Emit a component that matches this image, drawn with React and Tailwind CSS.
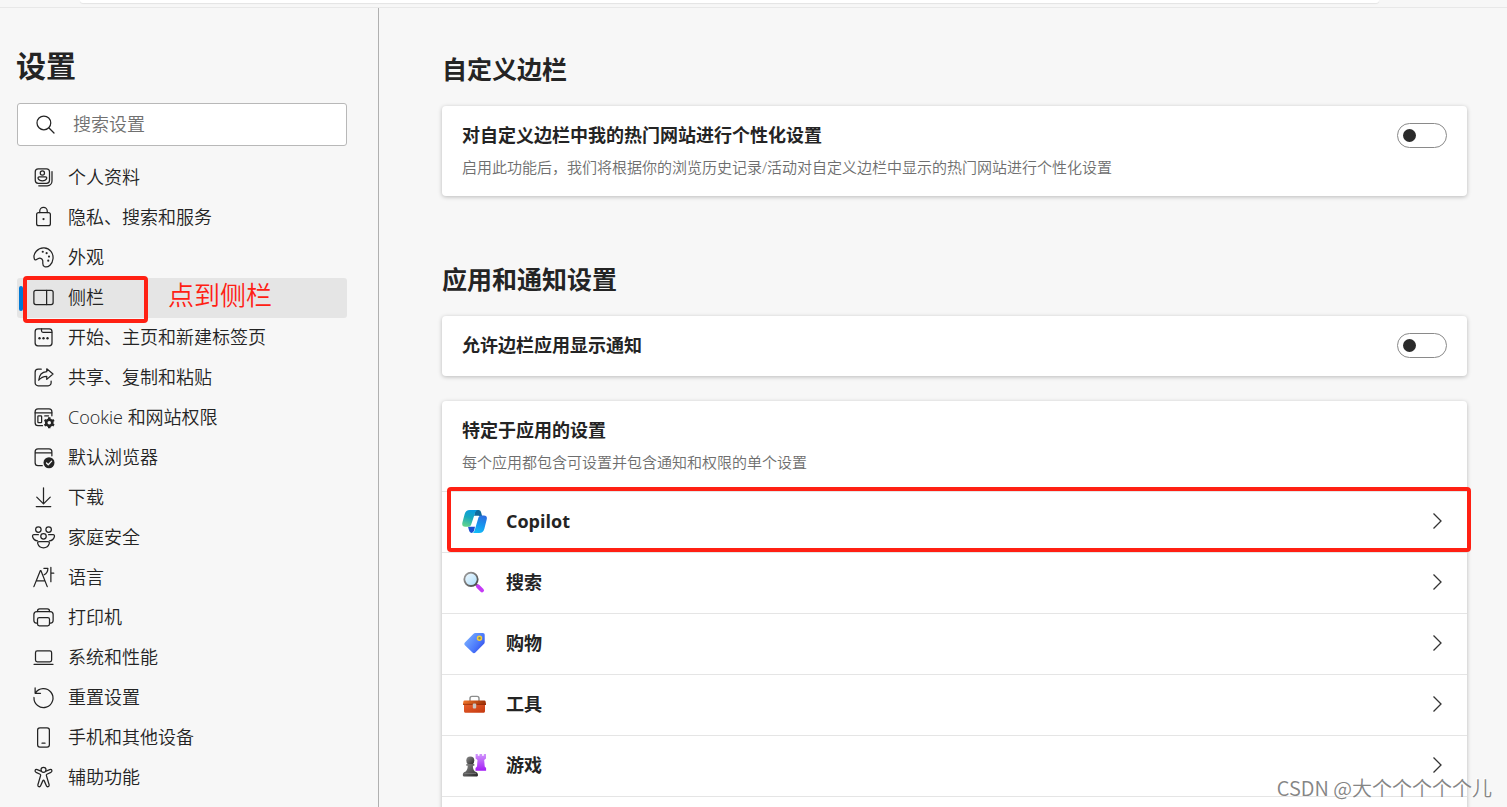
import React, { useState } from "react";

const LineIcon = ({ children }) => (
    <svg
        className="size-[25px] shrink-0"
        viewBox="0 0 20 20"
        fill="none"
        stroke="currentColor"
        strokeWidth="1"
        strokeLinecap="round"
        strokeLinejoin="round"
        aria-hidden="true"
    >
        {children}
    </svg>
)

const navItems = [
    {
        label: "个人资料",
        icon: (
            <>
                <rect x="3.4" y="3" width="11.4" height="11.6" rx="2.4" />
                <circle cx="9.1" cy="6.4" r="1.7" />
                <path d="M6.7 9.4h4.8c1.9 0 1.4 3.3-2.4 3.3s-4.3-3.3-2.4-3.3z" />
                <path d="M16.8 5.2v7.6c0 2.2-1.6 3.8-3.8 3.8H6.2" />
            </>
        ),
    },
    {
        label: "隐私、搜索和服务",
        icon: (
            <>
                <rect x="4.5" y="6" width="11" height="10.5" rx="1.6" />
                <path d="M7 6V4.8a3 3 0 0 1 6 0V6" />
                <circle cx="10" cy="11.2" r="0.9" fill="currentColor" stroke="none" />
            </>
        ),
    },
    {
        label: "外观",
        icon: (
            <>
                <path d="M2.7 11.2C1.2 6.8 5.6 2 10.5 2.3c4.6.3 7.6 4.2 7.1 8.7-.4 4.4-3.8 7.3-6.7 6.4-2.5-.8-1-3.4-1.6-5.2-.6-1.6-2.2-2.1-3.8-1.2-1.3.8-2.3 1.6-2.8.2z" />
                <g fill="currentColor" stroke="none">
                    <circle cx="9.4" cy="5.4" r="0.85" />
                    <circle cx="12.5" cy="6.5" r="0.85" />
                    <circle cx="14.4" cy="9.3" r="0.85" />
                    <circle cx="13.8" cy="12.5" r="0.85" />
                </g>
            </>
        ),
    },
    {
        label: "侧栏",
        active: true,
        icon: (
            <>
                <rect x="2.3" y="4.2" width="15.4" height="11.4" rx="1.6" />
                <path d="M12.5 4.2v11.4" />
            </>
        ),
    },
    {
        label: "开始、主页和新建标签页",
        icon: (
            <>
                <rect x="3.3" y="3.1" width="13.5" height="13.5" rx="2.2" />
                <path d="M8.4 3.1v1.5c0 .8.4 1.2 1.2 1.2h7" />
                <g fill="currentColor" stroke="none">
                    <circle cx="6.8" cy="10.6" r="0.95" />
                    <circle cx="10" cy="10.6" r="0.95" />
                    <circle cx="13.2" cy="10.6" r="0.95" />
                </g>
            </>
        ),
    },
    {
        label: "共享、复制和粘贴",
        icon: (
            <>
                <path d="M12.6 3l5 4.2-5 4.3V9C9.6 9 7.8 10 6.2 12.2c.3-4 2.5-6.6 6.4-6.9z" />
                <path d="M8.2 3.3H5.7a2.4 2.4 0 0 0-2.4 2.4v8.5a2.4 2.4 0 0 0 2.4 2.4h8a2.4 2.4 0 0 0 2.4-2.4v-1.4" />
            </>
        ),
    },
    {
        label: "Cookie 和网站权限",
        icon: (
            <>
                <path d="M9.2 16.5H5.6a2.3 2.3 0 0 1-2.3-2.3V5.4a2.3 2.3 0 0 1 2.3-2.3h8.8a2.3 2.3 0 0 1 2.3 2.3v3.2" />
                <path d="M3.3 6.2h13.4M11 8.7h3" />
                <rect x="5.5" y="8.7" width="3" height="5.3" rx="0.5" />
                <circle cx="14.6" cy="14.2" r="2.4" strokeWidth="2.2" />
                <path
                    d="M14.6 9.8v8.8M10.8 12l7.6 4.4M10.8 16.4l7.6-4.4"
                    strokeWidth="2"
                    strokeLinecap="butt"
                />
                <circle cx="14.6" cy="14.2" r="1.4" fill="#f7f7f7" stroke="none" />
            </>
        ),
    },
    {
        label: "默认浏览器",
        icon: (
            <>
                <path d="M9 16.5H5.6a2.3 2.3 0 0 1-2.3-2.3V5.4a2.3 2.3 0 0 1 2.3-2.3h8.8a2.3 2.3 0 0 1 2.3 2.3v3.2M3.3 6.2h13.4" />
                <circle cx="14.4" cy="14.2" r="4.4" fill="currentColor" stroke="none" />
                <path d="M12.4 14.4l1.4 1.4 2.7-2.9" stroke="#f7f7f7" />
            </>
        ),
    },
    {
        label: "下载",
        icon: <path d="M10 2.2v12.6M4.6 9.7l5.4 5.4 5.4-5.4M4.2 17.2h11.6" />,
    },
    {
        label: "家庭安全",
        icon: (
            <>
                <circle cx="5.9" cy="3.6" r="2.2" />
                <circle cx="14.1" cy="3.6" r="2.2" />
                <circle cx="10" cy="9" r="2.2" />
                <path d="M5.9 7.7H2.4c-1 0-1.4.7-1.1 1.700.5 1.9 1.900 3.100 4 3.300M14.100 7.700h3.500c1 0 1.400.7 1.100 1.700-.5 1.900-1.900 3.100-4 3.300" />
                <path d="M6.600 13.200h6.800c1.100 0 1.500.8 1.200 1.700-.6 2-2.300 3.300-4.600 3.300s-4-1.300-4.600-3.300c-.3-.9.1-1.700 1.200-1.700z" />
            </>
        ),
    },
    {
        label: "语言",
        icon: (
            <>
                <path d="M2.3 17.3L7.5 4.4h.4l5.1 12.9M4.2 12.6h7" />
                <path d="M10.3 2.6h3.2c0 2.6-1 4.3-3 5.2M15.9 1.9v11.4M15.9 6.5h2.3" />
            </>
        ),
    },
    {
        label: "打印机",
        icon: (
            <>
                <path d="M5.2 14.4h-.9a2 2 0 0 1-2-2V7.6a2.4 2.4 0 0 1 2.4-2.4h10.6a2.4 2.4 0 0 1 2.4 2.4v4.8a2 2 0 0 1-2 2h-.9" />
                <path d="M5.2 5.2v-.4c0-1 .7-1.7 1.7-1.7h6.2c1 0 1.7.7 1.7 1.7v.4" />
                <rect x="5.2" y="10" width="9.6" height="6.6" rx="1.4" />
            </>
        ),
    },
    {
        label: "系统和性能",
        icon: (
            <>
                <rect x="3.6" y="4.7" width="12.9" height="8.7" rx="1.4" />
                <path d="M2.4 15.4h15.2" />
            </>
        ),
    },
    {
        label: "重置设置",
        icon: <path d="M3.3 2.3v4.3h4.3M3.5 6.5A7.6 7.6 0 1 1 2.4 10" />,
    },
    {
        label: "手机和其他设备",
        icon: (
            <>
                <rect x="5.3" y="2.2" width="9.4" height="15.4" rx="1.8" />
                <path d="M8.8 14.5h2.4" />
            </>
        ),
    },
    {
        label: "辅助功能",
        icon: (
            <>
                <circle cx="10" cy="3.8" r="2" />
                <path d="M8 4.9L5 3.7c-1.7-.6-2.5 1.4-.9 2.2l3.2 1.5c.4.2.5.5.4 1L5.5 15.8c-.4 1.6 1.6 2.2 2.2.8l1.8-4.1c.2-.5.8-.5 1 0l1.8 4.1c.6 1.4 2.600.8 2.200-.8L12.300 8.400c-.1-.5 0-.8.4-1l3.200-1.500c1.600-.8.8-2.800-.9-2.200L12 4.900" />
            </>
        ),
    },
]

const CopilotIcon = () => (
    <svg className="size-[25px] shrink-0" viewBox="0 0 25 25" aria-hidden="true">
        <defs>
            <linearGradient id="cpLeft" x1="0.6" y1="0" x2="0.3" y2="1">
                <stop offset="0" stopColor="#0a9be0" />
                <stop offset="0.45" stopColor="#18a9bd" />
                <stop offset="1" stopColor="#62d38c" />
            </linearGradient>
            <linearGradient id="cpRight" x1="0.6" y1="0" x2="0.3" y2="1">
                <stop offset="0" stopColor="#2b6fe0" />
                <stop offset="0.5" stopColor="#1795ee" />
                <stop offset="1" stopColor="#12bdf8" />
            </linearGradient>
        </defs>
        <path d="M13.500 1h3.100c1.300 0 2 .7 2.400 2l1.200 4.200h-1.200c-1.100-.2-1.900-.4-2.500-.4H12z" fill="#0f6a9c" />
        <path d="M6 17.700h7l-1 4.300-2 2c-1.700 0-2.400-.8-2.900-2.400z" fill="#1a4fd0" />
        <path d="M7.800 1h8c-1.400.3-2.200 1.200-2.700 2.800L9.300 15.300c-.5 1.700-1.300 2.400-3 2.400H3.200c-2.500 0-3.400-1.700-2.800-4.200L2.700 5C3.500 2.300 5 1 7.800 1z" fill="url(#cpLeft)" />
        <path d="M17.200 24H10c1.400-.3 2.200-1.200 2.700-2.800l3.600-12.100c.5-1.700 1.300-2.700 3-2.700h2.700c2.500 0 3.300 1.500 2.700 4L22.300 20c-.8 2.700-2.300 4-5.100 4z" fill="url(#cpRight)" />
    </svg>
)

const MagnifierIcon = () => (
    <svg className="size-[25px] shrink-0" viewBox="0 0 25 25" aria-hidden="true">
        <defs>
            <linearGradient id="lens" x1="0" y1="0" x2="1" y2="1">
                <stop offset="0" stopColor="#f4fbff" />
                <stop offset="1" stopColor="#a9dcfb" />
            </linearGradient>
            <linearGradient id="rim" x1="0" y1="0" x2="1" y2="1">
                <stop offset="0" stopColor="#a2a2a2" />
                <stop offset="1" stopColor="#454545" />
            </linearGradient>
        </defs>
        <path d="M13.5 13.8l3 3" stroke="#6b6b6b" strokeWidth="2.4" />
        <path d="M16 16.3l4 4" stroke="#c53bf5" strokeWidth="4" strokeLinecap="round" />
        <circle cx="9" cy="9.3" r="6.7" fill="url(#lens)" stroke="url(#rim)" strokeWidth="1.8" />
    </svg>
)

const TagIcon = () => (
    <svg className="size-[25px] shrink-0" viewBox="0 0 25 25" aria-hidden="true">
        <defs>
            <linearGradient id="tagFill" x1="0" y1="0.2" x2="1" y2="0.9">
                <stop offset="0" stopColor="#7db2ff" />
                <stop offset="0.6" stopColor="#4a78fb" />
                <stop offset="1" stopColor="#2f3fe0" />
            </linearGradient>
        </defs>
        <path d="M13.5 2h7.3c1.2 0 1.9.7 1.9 1.9v7c0 .9-.3 1.5-.9 2.1l-8.4 8.6c-.9.9-2 .9-2.9 0l-7.600-7.400c-.8-.8-.8-1.800 0-2.700l8.400-8.600c.6-.6 1.300-.9 2.200-.9z" fill="url(#tagFill)" />
        <circle cx="17.5" cy="7.2" r="2" fill="#7b8c5b" stroke="#f5ce3a" strokeWidth="1.5" />
    </svg>
)

const ToolboxIcon = () => (
    <svg className="size-[25px] shrink-0" viewBox="0 0 25 25" aria-hidden="true">
        <defs>
            <linearGradient id="boxFill" x1="0" y1="0" x2="1" y2="1">
                <stop offset="0" stopColor="#e8602c" />
                <stop offset="1" stopColor="#c4380f" />
            </linearGradient>
            <linearGradient id="boxLid" x1="0" y1="0" x2="1" y2="0">
                <stop offset="0" stopColor="#f0752a" />
                <stop offset="1" stopColor="#9c3007" />
            </linearGradient>
        </defs>
        <path d="M8 9V6.5C8 5 8.8 4.4 10 4.4h5c1.2 0 2 .6 2 2.1V9" fill="none" stroke="#8b8d8d" strokeWidth="1.4" />
        <path d="M2 12.5h21v6.7c0 .9-.6 1.5-1.5 1.5h-18c-.9 0-1.5-.6-1.5-1.5z" fill="url(#boxFill)" />
        <path d="M2.5 8.5h20c.6 0 1 .3 1.1.9l.4 2.6c.1.6-.2 1-.8 1H1.8c-.6 0-.9-.4-.8-1l.4-2.6c.1-.6.5-.9 1.1-.9z" fill="url(#boxLid)" />
        <path d="M1 12.3h23" stroke="#8f2606" strokeWidth="0.8" />
        <rect x="10.8" y="11.5" width="3.4" height="5" rx="1" fill="#c9c5c3" />
    </svg>
)

const ChessIcon = () => (
    <svg className="size-[25px] shrink-0" viewBox="0 0 25 25" aria-hidden="true">
        <defs>
            <linearGradient id="pawn" x1="0" y1="0" x2="1" y2="1">
                <stop offset="0" stopColor="#8e8e8e" />
                <stop offset="1" stopColor="#262626" />
            </linearGradient>
            <linearGradient id="rook" x1="0" y1="0" x2="0" y2="1">
                <stop offset="0" stopColor="#d095fb" />
                <stop offset="1" stopColor="#a31cf5" />
            </linearGradient>
        </defs>
        <path d="M13.6 1h2.2v1.8h1.7V1h2.6v1.8h1.7V1H24v4.5l-1.8 1.4.5 6.6 1.4 1.6v2.6H13.500v-2.600l1.500-1.600.5-6.600-1.900-1.400z" fill="url(#rook)" />
        <circle cx="8.3" cy="7.6" r="4" fill="url(#pawn)" />
        <path d="M4.3 11.1h8v1.7h-1.4c0 2.4.5 4.2 2 5.8 1.9.7 3.1 1.7 3.1 3.3 0 1-.8 1.6-1.8 1.6H2.6c-1 0-1.8-.6-1.8-1.6 0-1.6 1-2.6 2.9-3.3 1.5-1.6 2-3.4 2-5.8H4.300z" fill="url(#pawn)" />
        <path d="M2.5 20.4h11.6" stroke="#8a8a8a" strokeWidth="0.7" />
    </svg>
)

const apps = [
    { name: "Copilot", icon: <CopilotIcon />, marked: true },
    { name: "搜索", icon: <MagnifierIcon /> },
    { name: "购物", icon: <TagIcon /> },
    { name: "工具", icon: <ToolboxIcon /> },
    { name: "游戏", icon: <ChessIcon /> },
]

const Card = ({ className, children }) => (
    <div className={`rounded-[4px] bg-white shadow-[0_1px_4px_rgba(0,0,0,0.25)] ${className || ""}`}>
        {children}
    </div>
)

const ToggleCard = ({ id, title, text }) => {
    const [on, setOn] = useState(false)

    return (
        <Card className="flex items-start justify-between px-5 pt-[17px] pb-[18px]">
            <div>
                <label htmlFor={id} className="block text-lg leading-6 font-bold">{title}</label>
                {text && <p className="mt-[10px] mb-px text-[15px] leading-5 font-[350] text-[#6e6e6e]">{text}</p>}
            </div>
            <input
                id={id}
                type="checkbox"
                role="switch"
                checked={on}
                onChange={() => setOn(!on)}
                className="flex h-[25px] w-[50px] shrink-0 appearance-none items-center rounded-full border border-[#8a8a8a] bg-white px-[5px] before:size-[13px] before:rounded-full before:bg-[#2b2b2b] checked:justify-end checked:border-[#0078d4] checked:bg-[#0078d4] checked:before:bg-white"
            />
        </Card>
    )
}

const App = () => {
    const [query, setQuery] = useState("")

    return (
        <div className="relative flex h-screen flex-col overflow-hidden bg-[#f7f7f7] font-['Open_Sans','Noto_Sans_CJK_SC',sans-serif] text-[#242424]">
            <div className="h-2 shrink-0 border-b border-[#e8e8e8]">
                <div className="mr-32 ml-20 h-[3px] rounded-b-lg bg-white shadow-[0_1px_1px_rgba(0,0,0,0.08)]" />
            </div>

            <div className="flex min-h-0 flex-1">
                <aside className="w-[379px] shrink-0 border-r border-[#b0b0b0] pt-[38px] pr-[31px] pl-4">
                    <h1 className="text-3xl leading-10 font-bold">设置</h1>

                    <label className="mt-[17px] ml-px flex h-[43px] items-center gap-[15px] rounded-[3px] border border-[#b8b8b8] bg-white pl-[15px]">
                        <LineIcon>
                            <circle cx="8.7" cy="8.7" r="5.5" />
                            <path d="M12.8 12.8l4 4" />
                        </LineIcon>
                        <input
                            type="text"
                            value={query}
                            onChange={(e) => setQuery(e.target.value)}
                            placeholder="搜索设置"
                            aria-label="搜索设置"
                            className="min-w-0 flex-1 pb-0.5 text-lg leading-6 font-[350] outline-none placeholder:text-[#707070]"
                        />
                    </label>

                    <nav className="mt-3 ml-px">
                        {navItems.map((item) => (
                            <div key={item.label} className="relative">
                                <a
                                    href="#"
                                    className={`flex h-10 items-center gap-3 rounded-[3px] pb-0.5 pl-[14px] text-lg font-[350] ${item.active ? "bg-[#e5e5e5]" : ""}`}
                                >
                                    <LineIcon>{item.icon}</LineIcon>
                                    {item.label}
                                </a>
                                {item.active && (
                                    <>
                                        <span className="absolute top-2 left-[2px] h-[25px] w-1 rounded-full bg-[#0078d4]" />
                                        <span className="absolute -top-[2px] left-[6px] h-[47px] w-[125px] rounded-[4px] border-4 border-[#ff2013]" />
                                        <span className="absolute -top-px left-[151px] text-[26px] leading-9 font-[350] text-[#ff2013]">点到侧栏</span>
                                    </>
                                )}
                            </div>
                        ))}
                    </nav>
                </aside>

                <main className="min-w-0 flex-1 pt-[45px] pr-10 pl-[63px]">
                    <h2 className="mb-[21px] text-[25px] leading-8 font-bold">自定义边栏</h2>
                    <ToggleCard
                        id="personalize"
                        title="对自定义边栏中我的热门网站进行个性化设置"
                        text="启用此功能后，我们将根据你的浏览历史记录/活动对自定义边栏中显示的热门网站进行个性化设置"
                    />

                    <h2 className="mt-[67px] mb-[21px] text-[25px] leading-8 font-bold">应用和通知设置</h2>
                    <ToggleCard id="notify" title="允许边栏应用显示通知" />

                    <Card className="mt-[25px] pb-[61px]">
                        <div className="px-5 pt-[17px] pb-[19px]">
                            <h3 className="text-lg leading-6 font-bold">特定于应用的设置</h3>
                            <p className="mt-[10px] text-[15px] leading-5 font-[350] text-[#6e6e6e]">每个应用都包含可设置并包含通知和权限的单个设置</p>
                        </div>
                        <div className="divide-y divide-[#e5e5e5] border-y border-[#e5e5e5]">
                            {apps.map((app) => (
                                <div key={app.name} className="relative">
                                    <button type="button" className="flex h-[60px] w-full items-center gap-[19px] px-5 pb-0.5 text-left text-lg font-bold">
                                        {app.icon}
                                        <span className="flex-1">{app.name}</span>
                                        <svg className="size-5" viewBox="0 0 20 20" fill="none" stroke="#333" strokeWidth="1.3" aria-hidden="true">
                                            <path d="M6.500 2.500L14 10l-7.500 7.500" />
                                        </svg>
                                    </button>
                                    {app.marked && (
                                        <span className="pointer-events-none absolute -top-[5px] -right-1 bottom-0 left-[5px] z-10 rounded-[4px] border-4 border-[#ff2013]" />
                                    )}
                                </div>
                            ))}
                        </div>
                    </Card>
                </main>
            </div>

            <p className="absolute right-[15px] bottom-1 font-['Noto_Sans_CJK_SC',sans-serif] text-xl leading-[30px] font-[350] text-[#858585] [text-shadow:-1px_-1px_0_#ffffff]">
                CSDN @大个个个个个儿
            </p>
        </div>
    )
}

export default App
